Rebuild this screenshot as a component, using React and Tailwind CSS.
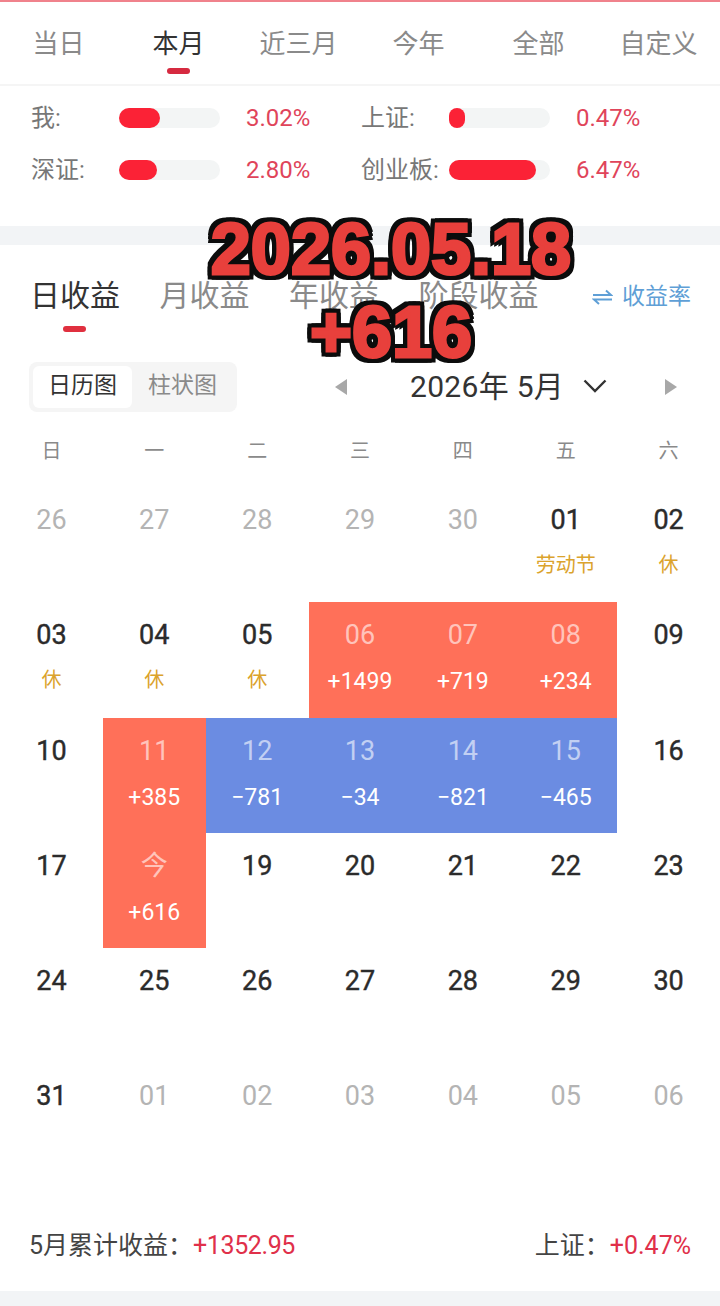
import React from 'react';

const CJK = "font-['Roboto','Noto_Sans_CJK_SC',sans-serif]";

const periods = ['当日', '本月', '近三月', '今年', '全部', '自定义'];
const earnings = ['日收益', '月收益', '年收益', '阶段收益'];
const weekdays = ['日', '一', '二', '三', '四', '五', '六'];

// tone: m = other month, n = normal, up = gain, down = loss
const days = [
  { d: '26', tone: 'm' }, { d: '27', tone: 'm' }, { d: '28', tone: 'm' }, { d: '29', tone: 'm' }, { d: '30', tone: 'm' },
  { d: '01', tone: 'n', note: '劳动节' }, { d: '02', tone: 'n', note: '休' },
  { d: '03', tone: 'n', note: '休' }, { d: '04', tone: 'n', note: '休' }, { d: '05', tone: 'n', note: '休' },
  { d: '06', tone: 'up', val: '+1499' }, { d: '07', tone: 'up', val: '+719' }, { d: '08', tone: 'up', val: '+234' }, { d: '09', tone: 'n' },
  { d: '10', tone: 'n' }, { d: '11', tone: 'up', val: '+385' }, { d: '12', tone: 'down', val: '−781' }, { d: '13', tone: 'down', val: '−34' },
  { d: '14', tone: 'down', val: '−821' }, { d: '15', tone: 'down', val: '−465' }, { d: '16', tone: 'n' },
  { d: '17', tone: 'n' }, { d: '今', tone: 'up', val: '+616' }, { d: '19', tone: 'n' }, { d: '20', tone: 'n' }, { d: '21', tone: 'n' }, { d: '22', tone: 'n' }, { d: '23', tone: 'n' },
  { d: '24', tone: 'n' }, { d: '25', tone: 'n' }, { d: '26', tone: 'n' }, { d: '27', tone: 'n' }, { d: '28', tone: 'n' }, { d: '29', tone: 'n' }, { d: '30', tone: 'n' },
  { d: '31', tone: 'n' }, { d: '01', tone: 'm' }, { d: '02', tone: 'm' }, { d: '03', tone: 'm' }, { d: '04', tone: 'm' }, { d: '05', tone: 'm' }, { d: '06', tone: 'm' },
];

const cellBg = { m: '', n: '', up: 'bg-[#ff7059]', down: 'bg-[#6b8ce2]' };
const dayColor = { m: 'text-[#b4b4b4]', n: 'text-[#2b2b2b] [-webkit-text-stroke:0.4px_#2b2b2b]', up: 'text-white/60', down: 'text-white/60' };

const Stat = ({ label, fill, value }) => (
  <div className="flex items-center h-[20px]">
    <span className="w-[88px] text-[24px] text-[#777777] leading-none">{label}</span>
    <div className="w-[101px] h-[20px] rounded-full bg-[#f3f5f5]">
      <div className="h-full rounded-full bg-[#fb2236]" style={{ width: fill }} />
    </div>
    <span className="ml-[26px] w-[66px] text-[24px] text-[#e0445a] leading-none">{value}</span>
  </div>
);

const Day = ({ d, tone, note, val }) => (
  <div className={`h-[115.25px] flex flex-col items-center pt-[17px] ${cellBg[tone]}`}>
    <span className={`h-[32px] leading-[32px] text-[27px] ${dayColor[tone]}`}>{d}</span>
    {note && <span className="mt-[14px] h-[30px] leading-[30px] text-[20px] text-[#dba32c]">{note}</span>}
    {val && <span className="mt-[16px] h-[30px] leading-[30px] text-[23px] text-white">{val}</span>}
  </div>
);

const outline = "[-webkit-text-stroke:3px_#e8403c] [filter:drop-shadow(4px_0_0_#0c0c0c)_drop-shadow(-4px_0_0_#0c0c0c)_drop-shadow(0_4px_0_#0c0c0c)_drop-shadow(0_-4px_0_#0c0c0c)]";

export default function App() {
  return (
    <div className={`relative w-[720px] h-[1306px] overflow-hidden bg-white ${CJK}`}>
      <div className="h-[2px] bg-[#f0828c]" />

      {/* period tabs */}
      <div className="flex h-[84px] border-b-2 border-[#f5f5f5]">
        {periods.map((p, i) => (
          <div key={p} className="relative flex-1 flex justify-center pt-[24px] pr-[3px]">
            <span className={`text-[26px] leading-[36px] ${i === 1 ? 'text-[#333333]' : 'text-[#8a8a8a]'}`}>{p}</span>
            {i === 1 && <div className="absolute top-[66px] w-[23px] h-[6px] rounded-sm bg-[#d62a40]" />}
          </div>
        ))}
      </div>

      {/* comparison bars */}
      <div className="h-[140px] pl-[31px] pt-[22px] grid grid-cols-[330px_330px] grid-rows-[20px_20px] gap-y-[32px]">
        <Stat label="我:" fill={41} value="3.02%" />
        <Stat label="上证:" fill={16} value="0.47%" />
        <Stat label="深证:" fill={38} value="2.80%" />
        <Stat label="创业板:" fill={87} value="6.47%" />
      </div>

      <div className="h-[19px] bg-[#f2f4f6]" />

      {/* earnings tabs */}
      <div className="h-[117px] relative flex items-start pl-[30px] pr-[29px] pt-[31px]">
        <div className="flex gap-[39.5px]">
          {earnings.map((e, i) => (
            <span key={e} className={`text-[30px] leading-[40px] ${i === 0 ? 'text-[#333333]' : 'text-[#8a8a8a]'}`}>{e}</span>
          ))}
        </div>
        <div className="ml-auto flex items-center gap-[9px] h-[40px] mt-[1px] text-[#5f9fd6] text-[23px]">
          <svg width="21" height="16" viewBox="0 0 21 16" fill="none" stroke="currentColor" strokeWidth="2">
            <path d="M1 6h18L14 1.5" />
            <path d="M20 10.5H2L7 15" />
          </svg>
          <span>收益率</span>
        </div>
        <div className="absolute left-[63px] top-[81px] w-[23px] h-[6px] rounded-sm bg-[#e0303f]" />
      </div>

      {/* chart switch and month */}
      <div className="flex items-center h-[50px] pl-[29px]">
        <div className="flex items-center w-[208px] h-[50px] p-[4px] rounded-lg bg-[#f5f5f5] text-[23px] leading-[40px]">
          <span className="w-[99px] h-[42px] text-center rounded-md bg-white text-[#333333]">日历图</span>
          <span className="flex-1 h-[42px] text-center text-[#8a8a8a]">柱状图</span>
        </div>
        <svg className="ml-[98px]" width="12" height="16" viewBox="0 0 12 16"><path d="M12 0v16L0 8z" fill="#a8a8a8" /></svg>
        <span className="ml-[63px] text-[30px] text-[#333333] leading-none whitespace-nowrap tracking-[0.3px]">2026年 5月</span>
        <svg className="ml-[19px] -mt-[3px]" width="24" height="14" viewBox="0 0 24 14" fill="none" stroke="#333333" strokeWidth="2.4"><path d="M1.5 1.5 12 12 22.5 1.5" /></svg>
        <svg className="ml-[58px]" width="12" height="16" viewBox="0 0 12 16"><path d="M0 0v16l12-8z" fill="#a8a8a8" /></svg>
      </div>

      {/* calendar */}
      <div className="grid grid-cols-7 h-[75px] pt-[25px]">
        {weekdays.map((w) => (
          <span key={w} className="text-center text-[20px] leading-[28px] text-[#8a8a8a]">{w}</span>
        ))}
      </div>
      <div className="grid grid-cols-7">
        {days.map((day, i) => <Day key={i} {...day} />)}
      </div>

      {/* month summary */}
      <div className="flex items-center justify-between h-[112px] pl-[29px] pr-[29px] pt-[22px] text-[25px] leading-none">
        <div className="text-[#444444]">5月累计收益：<span className="text-[#e0304a] tracking-[-0.4px]">+1352.95</span></div>
        <div className="text-[#444444]">上证：<span className="text-[#e0304a]">+0.47%</span></div>
      </div>
      <div className="h-[17px] bg-[#f2f4f6]" />

      {/* video caption over the page */}
      <div className="absolute left-0 right-0 top-[208px] pl-[62px] flex flex-col items-center font-['Liberation_Sans',sans-serif] font-bold text-[#e8403c] text-[72px] leading-[83px]">
        <span className={outline}>2026.05.18</span>
        <span className={outline}>+616</span>
      </div>
    </div>
  );
}
